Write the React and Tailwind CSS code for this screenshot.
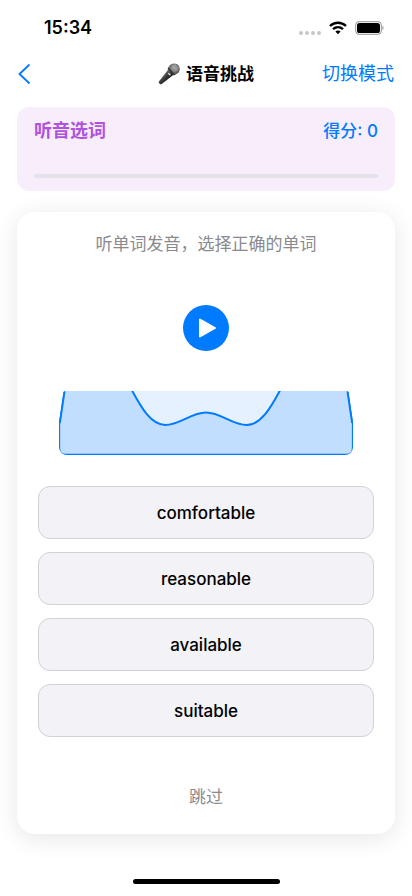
import React from "react";

const options = ["comfortable", "reasonable", "available", "suitable"];

function StatusBar() {
  return (
    <div className="flex h-14 items-center justify-between pl-11 pr-7">
      <span className="text-lg leading-6 font-semibold">15:34</span>
      <div className="flex items-center gap-2">
        <div className="flex gap-[2px] pt-[9px]">
          <i className="size-1 rounded-full bg-[#c7c7c7]" />
          <i className="size-1 rounded-full bg-[#c7c7c7]" />
          <i className="size-1 rounded-full bg-[#c7c7c7]" />
          <i className="size-1 rounded-full bg-[#c7c7c7]" />
        </div>
        <svg width="18" height="14" viewBox="0 0 18 14" fill="none" stroke="#000" strokeWidth="2.4">
          <path d="M1 5C5.600 .6 12.400 .6 17 5" />
          <path d="M4 8.200C6.900 5.500 11.100 5.500 14 8.200" />
          <path d="M6.400 10.500C7.900 9.200 10.100 9.200 11.600 10.500L9 13.200Z" fill="#000" stroke="none" />
        </svg>
        <svg width="29" height="14" viewBox="0 0 29 14">
          <rect x=".6" y=".6" width="25.800" height="12.800" rx="4" fill="#fff" stroke="#a9a9a9" strokeWidth="1.200" />
          <rect x="2" y="2" width="23" height="10" rx="2.600" fill="#000" />
          <path d="M27.400 4.800C29 5.400 29 8.600 27.400 9.200Z" fill="#a0a0a0" />
        </svg>
      </div>
    </div>
  );
}

function MicIcon() {
  return (
    <svg width="22" height="22" viewBox="0 0 22 22">
      <defs>
        <linearGradient id="micBody" x1="4" y1="11" x2="10" y2="17" gradientUnits="userSpaceOnUse">
          <stop offset="0" stopColor="#8b8b8b" />
          <stop offset=".4" stopColor="#4a4a4a" />
          <stop offset="1" stopColor="#161616" />
        </linearGradient>
        <radialGradient id="micHead" cx=".5" cy=".4" r=".6">
          <stop offset="0" stopColor="#a6a6a6" />
          <stop offset=".6" stopColor="#777" />
          <stop offset="1" stopColor="#454545" />
        </radialGradient>
      </defs>
      <path d="M10.200 6.500L15.500 11.800L3.400 21.200Q2.600 21.600 1.800 20.900L1 20.100Q.4 19.300 .9 18.500Z" fill="url(#micBody)" />
      <path d="M11.400 2.800C13.700 -.2 18.300 -.1 20.600 2.500C22.500 5 22.100 8.700 19.300 10.600L17.500 11.600L10.400 4.600Z" fill="url(#micHead)" />
      <path d="M10.500 4.200L17.700 11.500L15.900 12.400L9.600 6.100Z" fill="#303030" />
      <path d="M14 2L20 8M16.500 1.500L20.600 5.600M13.800 5.600L17.800 1.700M16.300 8.300L20.600 4.200" stroke="#c2c2c2" strokeWidth=".4" />
      <path d="M10.700 10.400L12 11.700" stroke="#ddd" strokeWidth="1.400" strokeLinecap="round" />
    </svg>
  );
}

function Waveform() {
  const curve =
    "M72 -2C82 17 92 34 106 34C120 34 132 21.500 146.500 21.500C161 21.500 173 34 187 34C201 34 211 17 221 -2";
  const area =
    "M.5 57V32L5.500 -2H287.500L292.500 32V57Q292.500 63.500 286 63.500H7Q.5 63.500 .5 57Z";

  return (
    <svg
      viewBox="0 0 293 64"
      preserveAspectRatio="none"
      className="h-16 w-full rounded-lg"
    >
      <path d={area} fill="#c2deff" stroke="#007aff" strokeWidth="1.300" strokeLinejoin="round" />
      <path d={curve} fill="#e5f1ff" stroke="#007aff" strokeWidth="2" />
      <path d="M.9 32L5.600 0M292.100 32L287.400 0" stroke="#007aff" strokeWidth="1.800" />
    </svg>
  );
}

export default function App() {
  return (
    <div className="flex min-h-screen flex-col bg-white text-black font-['Inter','Noto_Sans_CJK_SC',sans-serif]">
      <StatusBar />

      {/* Header */}
      <header className="grid h-[36px] grid-cols-[1fr_auto_1fr] items-center px-[18px]">
        <button type="button" aria-label="返回" className="justify-self-start text-[#007aff]">
          <svg width="12" height="20" viewBox="0 0 12 20" fill="none" stroke="currentColor" strokeWidth="1.800" strokeLinecap="round" strokeLinejoin="round">
            <path d="M11 1L1.500 10L11 19" />
          </svg>
        </button>
        <h1 className="flex items-center gap-1.5 text-[17px] leading-6 font-semibold">
          <MicIcon />
          语音挑战
        </h1>
        <button type="button" className="justify-self-end text-lg leading-6 text-[#007aff]">
          切换模式
        </button>
      </header>

      <main className="flex flex-1 flex-col px-[17px] pt-[15px]">
        {/* Score */}
        <section className="h-[84px] rounded-xl bg-[#f7edfb] px-[17px] pt-3">
          <div className="flex items-center justify-between">
            <h2 className="text-lg leading-6 font-semibold text-[#af52de]">听音选词</h2>
            <span className="text-[17px] leading-6 font-medium text-[#007aff]">得分: 0</span>
          </div>
          <div className="mt-[31px] h-1 rounded-full bg-[#e3e2e8]" />
        </section>

        {/* Question */}
        <section className="mt-[21px] flex flex-col items-stretch rounded-[18px] bg-white px-[21px] pt-5 pb-[25px] shadow-[0_4px_24px_rgba(0,0,0,0.1)]">
          <p className="text-center text-[17px] leading-6 text-[#8a8a8e]">
            听单词发音，选择正确的单词
          </p>
          <button type="button" aria-label="播放" className="mt-[49px] self-center">
            <svg width="46" height="46" viewBox="0 0 46 46">
              <circle cx="23" cy="23" r="23" fill="#007aff" />
              <path d="M17 14.500V31.500L32 23Z" fill="#fff" stroke="#fff" strokeWidth="2" strokeLinejoin="round" />
            </svg>
          </button>
          <div className="mt-10 px-[21px]">
            <Waveform />
          </div>
          <div className="mt-[31px] flex flex-col gap-[13px]">
            {options.map((word) => (
              <button
                key={word}
                type="button"
                className="h-[53px] rounded-xl border border-[#d1d1d6] bg-[#f2f2f7] text-[17px] leading-6 font-medium"
              >
                {word}
              </button>
            ))}
          </div>
          <button type="button" className="mt-12 self-center text-[17px] leading-6 text-[#8a8a8e]">
            跳过
          </button>
        </section>
      </main>

      <div className="mx-auto mb-3 h-[5px] w-[147px] rounded-full bg-black" />
    </div>
  );
}
